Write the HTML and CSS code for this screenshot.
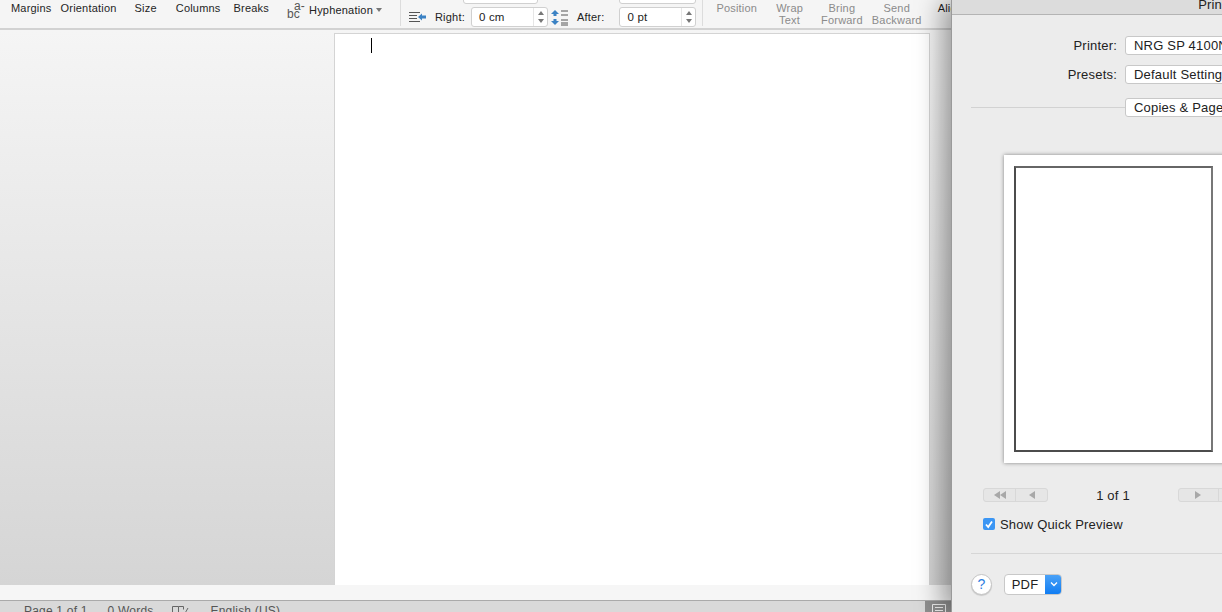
FILE: index.html
```html
<!DOCTYPE html>
<html lang="en">
<head>
    <meta charset="UTF-8">
    <title>Print</title>
    <link rel="stylesheet" href="styles.css">
</head>
<body>
    <div class="app">
        <div class="ribbon">
            <span class="tool tool-margins">Margins</span>
            <span class="tool tool-orientation">Orientation</span>
            <span class="tool tool-size">Size</span>
            <span class="tool tool-columns">Columns</span>
            <span class="tool tool-breaks">Breaks</span>
            <div class="hyphenation">
                <span class="hyph-icon"><span class="hyph-top">a-</span><span class="hyph-bottom">bc</span></span>
                <span class="hyph-label">Hyphenation</span>
                <span class="caret"></span>
            </div>
            <div class="ribbon-sep sep-one"></div>
            <svg class="indent-icon" width="18" height="12" viewBox="0 0 18 12">
                <path d="M0 1.500h11M0 4.500h8M0 7.500h8M0 10.500h11" stroke="#555" fill="none"/>
                <path d="M9 6l4-3.500v2h4v3h-4v2z" fill="#3b82c4"/>
            </svg>
            <span class="field-label label-right">Right:</span>
            <div class="field-stack stack-indent">
                <div class="field field-top"></div>
                <div class="field"><span>0 cm</span><span class="spin"><i class="up"></i><i class="down"></i></span></div>
            </div>
            <svg class="spacing-icon" width="18" height="46" viewBox="0 0 18 46">
                <path d="M0 8l4-4 4 4H5.500v3h-3V8z" fill="#3b82c4"/>
                <path d="M10 5h7M10 9h7M10 13h7" stroke="#555" fill="none"/>
                <path d="M4 26l4 4H5.500v2h-3v-2H0z" fill="#3b82c4"/>
                <path d="M0 37h2.500v-2h3v2H8l-4 4z" fill="#3b82c4"/>
                <path d="M10 27h7M10 31h7M10 36h7M10 39h7M10 41h7" stroke="#555" fill="none"/>
            </svg>
            <span class="field-label label-after">After:</span>
            <div class="field-stack stack-spacing">
                <div class="field field-top"></div>
                <div class="field"><span>0 pt</span><span class="spin"><i class="up"></i><i class="down"></i></span></div>
            </div>
            <div class="ribbon-sep sep-two"></div>
            <span class="tool off tool-position">Position</span>
            <span class="tool off tool-wrap">Wrap<br>Text</span>
            <span class="tool off tool-bring">Bring<br>Forward</span>
            <span class="tool off tool-send">Send<br>Backward</span>
            <span class="tool tool-align">Align</span>
        </div>

        <div class="workspace">
            <div class="page"><div class="text-cursor"></div></div>
        </div>

        <div class="hscroll"></div>

        <div class="statusbar">
            <span class="status-page">Page 1 of 1</span>
            <span class="status-words">0 Words</span>
            <svg class="status-proof" width="17" height="12" viewBox="0 0 17 12">
                <path d="M.5 1.500h6v10h-6zM6.500 1.500h5v3M6.500 11.500h5" stroke="#666" fill="none"/>
                <path d="M10 7l2 3 4-7" stroke="#666" fill="none"/>
            </svg>
            <span class="status-lang">English (US)</span>
            <div class="status-view">
                <svg width="14" height="12" viewBox="0 0 14 12">
                    <path d="M.5.500h13v12H.5zM3 3.500h8M3 6.500h8M3 9.500h8" stroke="#eee" fill="none"/>
                </svg>
            </div>
        </div>
    </div>

    <div class="dialog">
        <div class="dialog-title"><span>Print</span></div>

        <div class="form-row row-printer">
            <label class="form-label">Printer:</label>
            <div class="select">NRG SP 4100N PCL 5e</div>
        </div>
        <div class="form-row row-presets">
            <label class="form-label">Presets:</label>
            <div class="select">Default Settings</div>
        </div>
        <div class="form-row row-copies">
            <div class="rule-left"></div>
            <div class="select">Copies &amp; Pages</div>
        </div>

        <div class="paper"><div class="paper-inner"></div></div>

        <div class="pager">
            <div class="pager-group">
                <span class="pager-btn"><i class="tri-left"></i><i class="tri-left"></i></span>
                <span class="pager-btn"><i class="tri-left"></i></span>
            </div>
            <span class="pager-count">1 of 1</span>
            <div class="pager-group">
                <span class="pager-btn"><i class="tri-right"></i></span>
                <span class="pager-btn"><i class="tri-right"></i><i class="tri-right"></i></span>
            </div>
        </div>

        <div class="preview-check">
            <span class="checkbox">
                <svg width="12" height="12" viewBox="0 0 12 12"><path d="M3 6.500l2.200 2.500L9 3.500" stroke="#fff" stroke-width="1.800" fill="none"/></svg>
            </span>
            <span>Show Quick Preview</span>
        </div>

        <div class="dialog-rule"></div>

        <div class="dialog-footer">
            <span class="help">?</span>
            <div class="pdf-btn">
                <span class="pdf-label">PDF</span>
                <span class="pdf-arrow">
                    <svg width="8" height="6" viewBox="0 0 8 6"><path d="M1 1.500l3 3 3-3" stroke="#fff" stroke-width="1.300" fill="none"/></svg>
                </span>
            </div>
        </div>
    </div>
</body>
</html>
```

FILE: styles.css
```css
* {
    margin: 0;
    padding: 0;
    box-sizing: border-box;
}

html, body {
    height: 612px;
    overflow: hidden;
}

body {
    position: relative;
    font-family: 'Liberation Sans', Arial, sans-serif;
    color: #222;
}

.app {
    display: flex;
    flex-direction: column;
    width: 951px;
    height: 612px;
    overflow: hidden;
}

/* ribbon */

.ribbon {
    display: flex;
    align-items: flex-start;
    flex: none;
    height: 30px;
    padding-left: 11px;
    background: #f5f5f5;
    border-bottom: 2px solid #d2d2d2;
    overflow: hidden;
    font-size: 11px;
    letter-spacing: 0.2px;
}

.tool {
    flex: none;
    margin-top: 2px;
    line-height: 12px;
    text-align: center;
    color: #1f1f1f;
}

.tool.off {
    color: #8b8b8b;
}

.tool-orientation { margin-left: 9px; }
.tool-size { margin-left: 18px; }
.tool-columns { margin-left: 19px; }
.tool-breaks { margin-left: 13px; }
.tool-position { margin-left: 13px; }
.tool-wrap { margin-left: 19px; }
.tool-bring { margin-left: 18px; }
.tool-send { margin-left: 9px; }
.tool-align { margin-left: 16px; }

.hyphenation {
    display: flex;
    align-items: center;
    flex: none;
    height: 20px;
    margin-left: 18px;
}

.hyph-icon {
    display: flex;
    flex-direction: column;
    width: 19px;
    font-size: 12px;
    line-height: 8px;
    color: #555;
}

.hyph-top {
    margin-left: 7px;
}

.hyph-label {
    margin-left: 3px;
}

.caret {
    width: 0;
    height: 0;
    margin-left: 3px;
    border-left: 3px solid transparent;
    border-right: 3px solid transparent;
    border-top: 4px solid #777;
}

.ribbon-sep {
    flex: none;
    width: 1px;
    height: 26px;
    background: #dcdcdc;
}

.sep-one { margin-left: 18px; }
.sep-two { margin-left: 6px; }

.indent-icon {
    flex: none;
    margin: 11px 0 0 8px;
}

.spacing-icon {
    flex: none;
    margin: -16px 0 0 3px;
}

.field-label {
    flex: none;
    margin-top: 11px;
    line-height: 13px;
}

.label-right { margin-left: 8px; }
.label-after { margin-left: 8px; }

.field-stack {
    display: flex;
    flex-direction: column;
    flex: none;
    gap: 3px;
    margin-top: -13px;
    width: 77px;
}

.stack-indent { margin-left: 6px; }
.stack-spacing { margin-left: 15px; }

.stack-indent .field-top {
    width: 75px;
    margin-left: -8px;
}

.field {
    display: flex;
    align-items: center;
    justify-content: space-between;
    height: 20px;
    padding-left: 7px;
    background: #fff;
    border: 1px solid #d0d0d0;
    border-radius: 3px;
    font-size: 11.500px;
}

.field-top {
    height: 17px;
}

.spin {
    display: flex;
    flex-direction: column;
    justify-content: center;
    gap: 4px;
    width: 14px;
    height: 18px;
    padding-left: 4px;
    border-left: 1px solid #e6e6e6;
}

.spin i {
    display: block;
    width: 0;
    height: 0;
    border-left: 3px solid transparent;
    border-right: 3px solid transparent;
}

.spin .up { border-bottom: 4px solid #777; }
.spin .down { border-top: 4px solid #777; }

/* document area */

.workspace {
    display: flex;
    flex: 1;
    min-height: 0;
    padding: 3px 21px 0 334px;
    background: linear-gradient(#f5f5f5, #d5d5d5);
}

.page {
    flex: 1;
    padding: 4px 0 0 36px;
    background: #fff;
    border: 1px solid #d4d4d4;
    border-bottom: 0;
}

.text-cursor {
    width: 1px;
    height: 15px;
    background: #000;
}

.hscroll {
    flex: none;
    height: 15px;
    background: #f6f6f6;
}

.statusbar {
    display: flex;
    align-items: flex-start;
    flex: none;
    height: 12px;
    padding-left: 24px;
    background: #d9d9d9;
    border-top: 1px solid #aaa;
    font-size: 12px;
    letter-spacing: 0.2px;
    color: #555;
    overflow: hidden;
}

.statusbar > span {
    margin-top: 3px;
    line-height: 14px;
    white-space: nowrap;
}

.status-words { margin-left: 20px; }
.status-proof { margin: 4px 0 0 19px; flex: none; }
.status-lang { margin-left: 21px; }

.status-view {
    margin-left: auto;
    width: 26px;
    padding: 3px 0 0 7px;
    background: #8e8e8e;
    height: 12px;
}

/* print sheet */

.dialog {
    position: absolute;
    top: 0;
    left: 951px;
    width: 500px;
    height: 612px;
    background: #ececec;
    border-left: 1px solid #9a9a9a;
    box-shadow: -8px 0 26px rgba(0, 0, 0, 0.4);
    font-size: 13px;
    letter-spacing: 0.2px;
    color: #222;
}

.dialog-title {
    height: 15px;
    background: #dcdcdc;
    border-bottom: 1px solid #b4b4b4;
    text-align: center;
    width: 520px;
    overflow: hidden;
}

.dialog-title span {
    display: block;
    margin-top: -2px;
    line-height: 14px;
}

.form-row {
    display: flex;
    align-items: center;
    height: 19px;
}

.row-printer { margin-top: 21px; }
.row-presets { margin-top: 10px; }
.row-copies { margin-top: 14px; }

.form-label {
    width: 165px;
    text-align: right;
    margin-right: 8px;
}

.select {
    width: 220px;
    height: 19px;
    line-height: 17px;
    padding-left: 8px;
    background: #fff;
    border: 1px solid #c8c8c8;
    border-radius: 3px;
    white-space: nowrap;
}

.rule-left {
    width: 154px;
    height: 1px;
    margin: 0 0 0 19px;
    background: #d2d2d2;
}

.paper {
    width: 240px;
    height: 308px;
    margin: 38px 0 0 52px;
    padding: 11px 0 0 10px;
    background: #fff;
    box-shadow: 0 0 4px rgba(0, 0, 0, 0.45);
}

.paper-inner {
    width: 199px;
    height: 286px;
    border: 2px solid #4c4c4c;
    border-top-color: #666;
    border-right-color: #777;
}

.pager {
    display: flex;
    align-items: center;
    height: 14px;
    margin: 25px 0 0 31px;
}

.pager-group {
    display: flex;
    flex: none;
    width: 65px;
    height: 14px;
    background: #e6e6e6;
    border: 1px solid #d8d8d8;
    border-radius: 3px;
}

.pager-group + .pager-count + .pager-group {
    width: 80px;
}

.pager-btn {
    display: flex;
    align-items: center;
    justify-content: center;
    flex: 1;
}

.pager-btn + .pager-btn {
    border-left: 1px solid #d8d8d8;
}

.pager-btn i {
    width: 0;
    height: 0;
    border-top: 4px solid transparent;
    border-bottom: 4px solid transparent;
}

.tri-left { border-right: 6px solid #a8a8a8; }
.tri-right { border-left: 6px solid #a8a8a8; }

.pager-count {
    width: 130px;
    text-align: center;
}

.preview-check {
    display: flex;
    align-items: center;
    gap: 5px;
    height: 14px;
    margin: 15px 0 0 31px;
}

.checkbox {
    display: block;
    width: 12px;
    height: 12px;
    background: #3b96f4;
    border-radius: 2px;
}

.dialog-rule {
    height: 1px;
    margin: 22px 0 0 19px;
    background: #d6d6d6;
}

.dialog-footer {
    display: flex;
    align-items: center;
    height: 22px;
    margin: 19px 0 0 19px;
}

.help {
    width: 21px;
    height: 21px;
    line-height: 19px;
    text-align: center;
    font-size: 14px;
    color: #2d7de0;
    background: #fff;
    border: 1px solid #c4c4c4;
    border-radius: 50%;
    box-shadow: 0 1px 1px rgba(0, 0, 0, 0.15);
}

.pdf-btn {
    display: flex;
    width: 58px;
    height: 21px;
    margin-left: 12px;
    background: #fff;
    border: 1px solid #c8c8c8;
    border-radius: 4px;
    overflow: hidden;
}

.pdf-label {
    flex: 1;
    line-height: 19px;
    text-align: center;
}

.pdf-arrow {
    display: flex;
    align-items: center;
    justify-content: center;
    width: 17px;
    margin: -1px -1px -1px 0;
    background: linear-gradient(#4da3f7, #0d7bf2);
}
```
